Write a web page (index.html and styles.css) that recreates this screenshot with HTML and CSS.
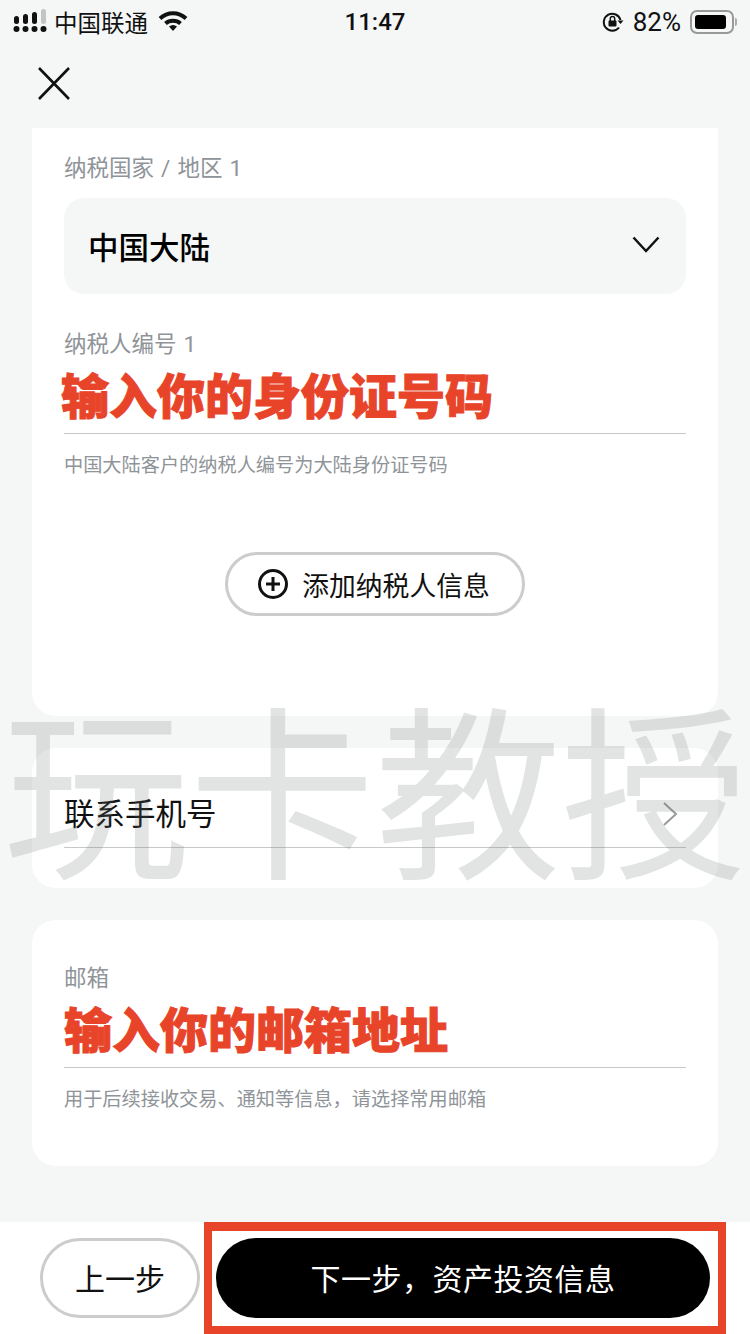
FILE: index.html
```html
<!DOCTYPE html>
<html lang="zh-CN">
<head>
  <meta charset="UTF-8">
  <title>纳税人信息</title>
  <link rel="stylesheet" href="styles.css">
</head>
<body>
  <div class="pagina">

    <!-- STATUS BAR -->
    <div class="status">
      <div class="status-lado">
        <svg class="sinal" width="34" height="24" viewBox="0 0 34 24">
          <rect x="1" y="7" width="5" height="8" rx="2.5" fill="#111"/>
          <rect x="10" y="5" width="5" height="10" rx="2.5" fill="#111"/>
          <rect x="19" y="3" width="5" height="12" rx="2.5" fill="#111"/>
          <rect x="28" y="0" width="5" height="15" rx="2.5" fill="#c4c4c4"/>
          <circle cx="3.5" cy="20" r="3" fill="#111"/>
          <circle cx="12.5" cy="20" r="3" fill="#111"/>
          <circle cx="21.5" cy="20" r="3" fill="#111"/>
          <circle cx="30.5" cy="20" r="3" fill="#111"/>
        </svg>
        <span class="operadora">中国联通</span>
        <svg class="wifi" width="30" height="22" viewBox="0 0 30 22">
          <path d="M2 8.5C9.500 1.500 20.500 1.500 28 8.500" fill="none" stroke="#111" stroke-width="4"/>
          <path d="M7.500 13.500C11.500 9.800 18.500 9.800 22.500 13.500" fill="none" stroke="#111" stroke-width="4"/>
          <path d="M11 16.500Q15 13.500 19 16.500L15 21Z" fill="#111"/>
        </svg>
      </div>
      <div class="hora">11:47</div>
      <div class="status-lado direita">
        <svg class="trava" width="22" height="20" viewBox="0 0 22 20">
          <path d="M18.500 8A8.500 8.500 0 1 0 17 15.500" fill="none" stroke="#111" stroke-width="2"/>
          <path d="M15.500 8.500h6l-3 3.500z" fill="#111"/>
          <rect x="6.500" y="8.500" width="8" height="6" rx="1" fill="#111"/>
          <path d="M8.300 9V6.800a2.200 2.200 0 0 1 4.400 0V9" fill="none" stroke="#111" stroke-width="1.500"/>
        </svg>
        <span class="bateria-texto">82%</span>
        <div class="bateria"><div class="bateria-nivel"></div></div>
        <div class="bateria-ponta"></div>
      </div>
    </div>

    <!-- TOPO -->
    <div class="topo">
      <svg width="34" height="34" viewBox="0 0 34 34">
        <path d="M2 1L32 32M32 1L2 32" stroke="#111" stroke-width="2.600" fill="none"/>
      </svg>
    </div>

    <!-- CARD 1 -->
    <div class="card card-imposto">
      <div class="rotulo">纳税国家 / 地区 1</div>
      <div class="seletor">
        <span>中国大陆</span>
        <svg width="28" height="17" viewBox="0 0 28 17">
          <path d="M1.500 1.500L14 15L26.500 1.500" stroke="#111" stroke-width="2.500" fill="none"/>
        </svg>
      </div>
      <div class="rotulo rotulo-numero">纳税人编号 1</div>
      <div class="campo"><span class="marcado">输入你的身份证号码</span></div>
      <div class="dica">中国大陆客户的纳税人编号为大陆身份证号码</div>
      <button class="adicionar">
        <svg width="32" height="32" viewBox="0 0 32 32">
          <circle cx="16" cy="16" r="13.500" stroke="#111" stroke-width="3" fill="none"/>
          <path d="M16 9v14M9 16h14" stroke="#111" stroke-width="3" fill="none"/>
        </svg>
        添加纳税人信息
      </button>
    </div>

    <!-- CARD 2 -->
    <div class="card card-telefone">
      <div class="linha-telefone">
        <span>联系手机号</span>
        <svg width="16" height="24" viewBox="0 0 16 24">
          <path d="M2 1L14 12L2 23" stroke="#999" stroke-width="2" fill="none"/>
        </svg>
      </div>
    </div>

    <!-- CARD 3 -->
    <div class="card card-email">
      <div class="rotulo">邮箱</div>
      <div class="campo"><span class="marcado marcado-email">输入你的邮箱地址</span></div>
      <div class="dica">用于后续接收交易、通知等信息，请选择常用邮箱</div>
    </div>

    <!-- RODAPE -->
    <div class="rodape">
      <button class="btn-voltar">上一步</button>
      <button class="btn-proximo">下一步，资产投资信息</button>
      <div class="moldura"></div>
    </div>

    <div class="marca-dagua">玩卡教授</div>
  </div>
</body>
</html>
```

FILE: styles.css
```css
* {
  box-sizing: border-box;
}

body {
  margin: 0;
  font-family: Roboto, "Noto Sans CJK SC", sans-serif;
  background-color: #f5f7f6;
  color: #111;
  overflow: hidden;
}

.pagina {
  position: relative;
  display: flex;
  flex-direction: column;
  width: 750px;
  height: 1334px;
  overflow: hidden;
}

/* status bar */
.status {
  display: flex;
  justify-content: space-between;
  align-items: center;
  height: 44px;
  padding: 0 13px;
}

.status-lado {
  display: flex;
  align-items: center;
  width: 260px;
}

.status-lado.direita {
  justify-content: flex-end;
}

.sinal {
  margin-top: -3px;
}

.operadora {
  margin-left: 7px;
  font-size: 23.500px;
}

.wifi {
  margin-left: 10px;
  margin-top: -3px;
}

.hora {
  font-size: 24px;
  font-weight: 500;
}

.trava {
  margin-right: 2px;
}

.bateria-texto {
  margin: 0 9px 0 7px;
  font-size: 26px;
}

.bateria {
  width: 44px;
  height: 24px;
  padding: 3px;
  border: 2px solid #999;
  border-radius: 7px;
}

.bateria-nivel {
  width: 31px;
  height: 14px;
  background: #000;
  border-radius: 3px;
}

.bateria-ponta {
  width: 2px;
  height: 8px;
  margin-left: 1px;
  background: #aaa;
  border-radius: 0 2px 2px 0;
}

.topo {
  display: flex;
  height: 84px;
  padding: 23px 0 0 37px;
}

/* cards */
.card {
  margin: 0 32px;
  padding: 0 32px;
  background: #fff;
  border-radius: 24px;
}

.card-imposto {
  height: 588px;
  padding-top: 25px;
  border-radius: 0 0 24px 24px;
}

.rotulo {
  height: 30px;
  font-size: 22.500px;
  line-height: 30px;
  word-spacing: 1.500px;
  color: #8f9499;
}

.seletor {
  display: flex;
  justify-content: space-between;
  align-items: center;
  height: 96px;
  margin-top: 15px;
  padding: 0 26px 0 24px;
  background: #f5f7f6;
  border-radius: 20px;
  font-size: 30.500px;
  font-weight: 500;
  color: #000;
}

.seletor svg {
  margin-top: -4px;
}

.rotulo-numero {
  margin-top: 35px;
}

.campo {
  display: flex;
  align-items: center;
  height: 75px;
  border-bottom: 1px solid #c8c8c8;
}

.marcado {
  margin: 3px 0 0 -3px;
  font-size: 48px;
  font-weight: 900;
  line-height: 60px;
  color: #e8442a;
  -webkit-text-stroke: 1px #e8442a;
  white-space: nowrap;
}

.marcado-email {
  margin-left: 0;
}

.dica {
  margin-top: 18px;
  font-size: 19.200px;
  line-height: 28px;
  color: #8f9499;
  white-space: nowrap;
}

.adicionar {
  display: flex;
  justify-content: center;
  align-items: center;
  gap: 13px;
  width: 300px;
  height: 64px;
  margin: 72px auto 0;
  padding: 0 3px 0 0;
  background: #fff;
  border: 3px solid #ccc;
  border-radius: 32px;
  font-family: inherit;
  font-size: 26.800px;
  color: #111;
}

.card-telefone {
  height: 140px;
  margin-top: 32px;
  padding-top: 46px;
}

.linha-telefone {
  display: flex;
  justify-content: space-between;
  align-items: center;
  height: 54px;
  padding: 0 8px 14px 0;
  border-bottom: 1px solid #c8c8c8;
  font-size: 30.500px;
}

.linha-telefone span {
  margin-top: -4px;
}

.card-email {
  height: 246px;
  margin-top: 32px;
  padding-top: 43px;
}

/* rodape */
.rodape {
  position: relative;
  display: flex;
  gap: 16px;
  height: 112px;
  margin-top: 56px;
  padding: 16px 40px;
  background: #fff;
}

.rodape button {
  height: 80px;
  padding: 0 0 2px;
  border-radius: 40px;
  font-family: inherit;
  font-size: 30px;
}

.btn-voltar {
  width: 160px;
  background: #fff;
  border: 3px solid #ccc;
  color: #111;
}

.btn-proximo {
  width: 494px;
  background: #000;
  border: none;
  color: #fff;
  letter-spacing: 0.500px;
}

.moldura {
  position: absolute;
  top: 0;
  left: 204px;
  width: 522px;
  height: 112px;
  border: 8px solid #e8442a;
  border-top-width: 9px;
}

.marca-dagua {
  position: absolute;
  top: 694px;
  left: 3px;
  font-size: 186px;
  line-height: 214px;
  color: rgba(110, 118, 118, 0.2);
  white-space: nowrap;
  pointer-events: none;
}
```
